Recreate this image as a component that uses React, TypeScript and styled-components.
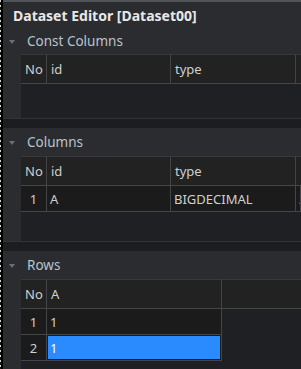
import React from 'react'
import styled, { createGlobalStyle } from 'styled-components'

const GlobalStyle = createGlobalStyle`
  html, body {
    margin: 0;
    padding: 0;
    background: #000;
  }
  body {
    font-family: "Noto Sans", "Open Sans", sans-serif;
  }
`

type Table = {
  title: string
  headerHeight: number
  bodyHeight?: number
  columns: string[]
  widths: string
  rows: string[][]
  selected?: [number, number]
}

const sections: Table[] = [
  {
    title: 'Const Columns',
    headerHeight: 26,
    bodyHeight: 64,
    columns: ['No', 'id', 'type', ''],
    widths: '26px 124px 125px 1fr',
    rows: [],
  },
  {
    title: 'Columns',
    headerHeight: 28,
    bodyHeight: 85,
    columns: ['No', 'id', 'type', ''],
    widths: '26px 124px 125px 1fr',
    rows: [['1', 'A', 'BIGDECIMAL', '255']],
  },
  {
    title: 'Rows',
    headerHeight: 28,
    columns: ['No', 'A', ''],
    widths: '26px 175px 1fr',
    rows: [
      ['1', '1'],
      ['2', '1'],
    ],
    selected: [1, 1],
  },
]

function App() {
  return (
    <Screen>
      <GlobalStyle />
      <Backdrop />
      <Editor>
        <TitleBar>Dataset Editor [Dataset00]</TitleBar>
        {sections.map((s, i) => (
          <React.Fragment key={s.title}>
            {i > 0 && <Separator />}
            <Section $grow={!s.bodyHeight}>
              <SectionHeader $h={s.headerHeight}>
                <Arrow />
                <SectionTitle>{s.title}</SectionTitle>
              </SectionHeader>
              <TableArea $h={s.bodyHeight}>
                <Row $cols={s.widths}>
                  {s.columns.map((c, j) => (
                    <HeadCell key={j} $last={j === s.columns.length - 1}>
                      {c}
                    </HeadCell>
                  ))}
                </Row>
                {s.rows.map((r, ri) => (
                  <Row key={ri} $cols={s.widths}>
                    {r.map((v, ci) => (
                      <Cell
                        key={ci}
                        $center={ci === 0}
                        $selected={!!s.selected && s.selected[0] === ri && s.selected[1] === ci}
                      >
                        {v}
                      </Cell>
                    ))}
                  </Row>
                ))}
              </TableArea>
            </Section>
          </React.Fragment>
        ))}
      </Editor>
    </Screen>
  )
}

const Screen = styled.div`
  display: flex;
  width: 301px;
  height: 369px;
  overflow: hidden;
  background: #000;
`

const Backdrop = styled.div`
  width: 1px;
  flex-shrink: 0;
  background: repeating-linear-gradient(to bottom, #d6d6d6 0 2px, #151515 2px 5px);
`

const Editor = styled.div`
  flex: 1;
  min-width: 0;
  margin-left: 2px;
  border-top: 2px solid #505357;
  background: #2b2c30;
  display: flex;
  flex-direction: column;
`

const TitleBar = styled.div`
  height: 26px;
  flex-shrink: 0;
  display: flex;
  align-items: center;
  padding-left: 10px;
  font-size: 14px;
  font-weight: 700;
  color: #e8e8e8;
  white-space: nowrap;
`

const Separator = styled.div`
  height: 9px;
  flex-shrink: 0;
  background: #1c1d20;
  border-top: 1px solid #323338;
`

const Section = styled.section<{ $grow: boolean }>`
  display: flex;
  flex-direction: column;
  flex: ${p => (p.$grow ? 1 : 'none')};
  min-height: 0;
`

const SectionHeader = styled.div<{ $h: number }>`
  height: ${p => p.$h}px;
  display: flex;
  align-items: center;
`

const Arrow = styled.span`
  width: 0;
  height: 0;
  margin: 1px 12px 0 6px;
  border-left: 3px solid transparent;
  border-right: 3px solid transparent;
  border-top: 4px solid #6b6d72;
`

const SectionTitle = styled.span`
  font-size: 13.5px;
  color: #b9c3cd;
`

const TableArea = styled.div<{ $h?: number }>`
  margin-left: 18px;
  background: #1f2024;
  overflow: hidden;
  height: ${p => (p.$h ? `${p.$h}px` : 'auto')};
  flex: ${p => (p.$h ? 'none' : 1)};
`

const Row = styled.div<{ $cols: string }>`
  display: grid;
  grid-template-columns: ${p => p.$cols};
`

const HeadCell = styled.div<{ $last: boolean }>`
  height: 30px;
  box-sizing: border-box;
  display: flex;
  align-items: center;
  padding-left: 4px;
  background: #222222;
  border-top: 1px solid #38393c;
  border-bottom: 1px solid #444548;
  border-right: ${p => (p.$last ? 'none' : '1px solid #444548')};
  font-size: 13px;
  color: #cfcfcf;
  white-space: nowrap;
`

const Cell = styled.div<{ $center: boolean; $selected: boolean }>`
  height: 26px;
  box-sizing: border-box;
  display: flex;
  align-items: center;
  justify-content: ${p => (p.$center ? 'center' : 'flex-start')};
  padding-left: ${p => (p.$center ? 0 : 3)}px;
  background: ${p => (p.$selected ? '#2a8bff' : '#1b1b1b')};
  box-shadow: ${p => (p.$selected ? 'inset 0 0 0 1px #1b1b1b' : 'none')};
  border-right: 1px solid #444548;
  border-bottom: 1px solid #444548;
  font-size: 13px;
  color: ${p => (p.$selected ? '#ffffff' : '#cfcfcf')};
  white-space: nowrap;
  overflow: hidden;
`

export default App
